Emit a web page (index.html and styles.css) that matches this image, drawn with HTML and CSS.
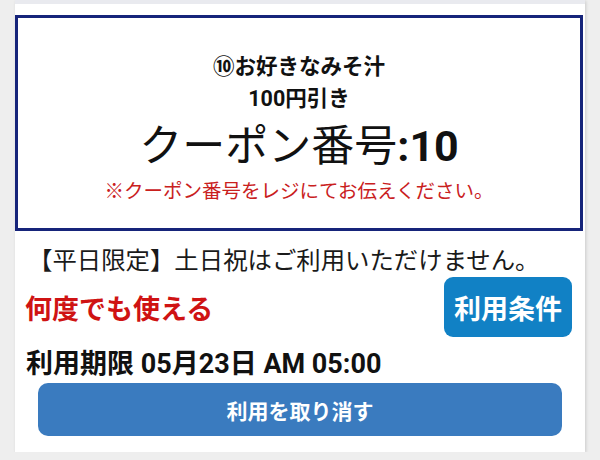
FILE: index.html
```html
<!DOCTYPE html>
<html lang="ja">
<head>
<meta charset="utf-8">
<link rel="stylesheet" href="styles.css">
</head>
<body>
<div class="card">
  <div class="coupon">
    <div class="title">⑩お好きなみそ汁</div>
    <div class="sub">100円引き</div>
    <div class="code">クーポン番号<b>:10</b></div>
    <div class="note">※クーポン番号をレジにてお伝えください。</div>
  </div>
  <div class="notice">【平日限定】土日祝はご利用いただけません。</div>
  <div class="row">
    <div class="repeat">何度でも使える</div>
    <div class="terms">利用条件</div>
  </div>
  <div class="expiry">利用期限 05月23日 AM 05:00</div>
  <div class="cancel">利用を取り消す</div>
</div>
</body>
</html>
```
FILE: styles.css
```css
html, body {
  margin: 0;
  padding: 0;
  background: #eeeeee;
  font-family: Roboto, "Noto Sans CJK JP", sans-serif;
  color: #111;
}
.card {
  margin: 0 15px;
  width: 570px;
  height: 452px;
  box-sizing: border-box;
  background: #fff;
  box-shadow: 1px 1px 3px rgba(0,0,0,0.15);
  border-top: 4px solid #e9eaef;
  padding-top: 11px;
}
.coupon {
  margin-right: 2px;
  border: 3px solid #16247a;
  text-align: center;
  padding: 34px 0 22px;
}
.title {
  font-size: 21.5px;
  font-weight: 700;
  line-height: 30px;
}
.sub {
  font-size: 21.5px;
  font-weight: 700;
  line-height: 30px;
  margin-top: 2px;
}
.code {
  font-size: 43px;
  line-height: 50px;
  margin-top: 7px;
}
.code b {
  font-weight: 700;
}
.note {
  color: #c9201d;
  font-size: 19.5px;
  line-height: 28px;
  margin-top: 7px;
}
.notice {
  font-size: 24.4px;
  line-height: 30px;
  margin-top: 15px;
  padding-left: 13px;
  color: #1a1a1a;
}
.row {
  display: flex;
  justify-content: space-between;
  align-items: center;
  margin-top: 1px;
  padding-left: 10px;
  padding-right: 13px;
}
.repeat {
  color: #cf1313;
  font-size: 27px;
  font-weight: 700;
}
.terms {
  width: 128px;
  height: 60px;
  border-radius: 9px;
  background: #1181c5;
  color: #fff;
  font-size: 27px;
  font-weight: 700;
  display: flex;
  align-items: center;
  justify-content: center;
}
.expiry {
  font-size: 27px;
  font-weight: 700;
  line-height: 32px;
  margin-top: 11px;
  padding-left: 11px;
}
.cancel {
  margin: 3px 23px 0;
  height: 53px;
  border-radius: 10px;
  background: #3a7bbf;
  color: #fff;
  font-size: 21px;
  font-weight: 700;
  display: flex;
  align-items: center;
  justify-content: center;
}
```
